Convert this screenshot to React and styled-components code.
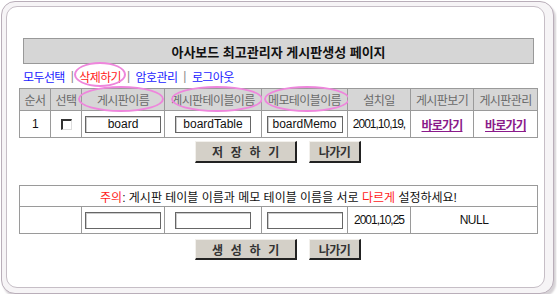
import React from 'react'
import styled, { createGlobalStyle } from 'styled-components'

const GlobalStyle = createGlobalStyle`
  body {
    margin: 0;
    background: #fff;
    font-family: "Liberation Sans", "Noto Sans CJK KR", sans-serif;
    font-size: 12px;
    color: #222;
  }
`

const Frame = styled.div`
  box-sizing: border-box;
  margin: 1px 0 0 1px;
  width: 553px;
  height: 293px;
  padding: 4px 8px 5px 4px;
  border: 1px solid #b9aeb9;
  border-radius: 14px;
  background: #f6f4f6;
  box-shadow: 2px 3px 2px #d6d2d6;
  display: flex;
`

const Card = styled.div`
  flex: 1;
  border: 1px solid #c6bec6;
  border-radius: 11px;
  background: #fff;
  padding: 31px 0 0 12px;
`

const TitleBar = styled.div`
  box-sizing: border-box;
  width: 511px;
  height: 26px;
  margin-left: 4px;
  border: 1px solid #999;
  background: #d6d6d6;
  display: flex;
  align-items: center;
  justify-content: center;
  font-size: 13px;
  font-weight: bold;
  color: #111;
`

const LinkRow = styled.div`
  height: 24px;
  padding-left: 4px;
  display: flex;
  align-items: center;
  gap: 6px;
  letter-spacing: -0.6px;
`

const NavLink = styled.span`
  position: relative;
  color: ${p => (p.$red ? '#ff1a1a' : '#1a1aff')};
`

const Sep = styled.span`
  color: #888;
`

const Ellipse = styled.span`
  position: absolute;
  left: ${p => p.$left}px;
  top: ${p => p.$top}px;
  width: ${p => p.$w}px;
  height: ${p => p.$h}px;
  border: 2px solid #ee86dc;
  border-radius: 50%;
  box-sizing: border-box;
  pointer-events: none;
`

const Table = styled.table`
  width: 518px;
  table-layout: fixed;
  border-collapse: collapse;
  margin-top: ${p => p.$top || 0}px;
`

const Head = styled.th`
  position: relative;
  height: 21px;
  padding: 0;
  border: 1px solid #9a9a9a;
  background: #d6d6d6;
  color: #6a6a6a;
  font-weight: normal;
  letter-spacing: -0.6px;
  white-space: nowrap;
`

const Cell = styled.td`
  height: ${p => p.$h || 26}px;
  padding: 0;
  border: 1px solid #9a9a9a;
  text-align: center;
  color: #111;
  letter-spacing: ${p => p.$spacing ?? -0.5}px;
  white-space: nowrap;
`

const NameInput = styled.input`
  box-sizing: border-box;
  width: 76px;
  height: 17px;
  padding: 0;
  border: 1px solid #666;
  box-shadow: inset 1px 1px 0 #ccc;
  font-family: "Liberation Sans", sans-serif;
  font-size: 12px;
  text-align: center;
  color: #111;
  vertical-align: middle;
`

const Check = styled.span`
  display: inline-block;
  width: 11px;
  height: 11px;
  box-sizing: border-box;
  border-style: solid;
  border-width: 2px 1px 1px 2px;
  border-color: #333 #ddd #ddd #333;
  vertical-align: middle;
`

const GoLink = styled.a`
  color: #8a1a8a;
  font-weight: bold;
  text-decoration: underline;
  letter-spacing: -0.8px;
`

const Red = styled.span`
  color: #ff1a1a;
`

const ButtonRow = styled.div`
  width: 518px;
  display: flex;
  justify-content: center;
  gap: 12px;
  margin-top: ${p => p.$top}px;
`

const Button = styled.button`
  box-sizing: border-box;
  width: ${p => p.$w}px;
  height: ${p => p.$h}px;
  padding: 0;
  background: #d4d0c8;
  border-style: solid;
  border-width: 1px 2px 2px 1px;
  border-color: #f2f0ec #222 #222 #f2f0ec;
  font-family: "Noto Sans CJK KR", sans-serif;
  font-size: 12px;
  font-weight: bold;
  color: #333;
  word-spacing: ${p => (p.$spaced ? '6px' : '0')};
  letter-spacing: -0.5px;
`

const widths = [31, 31, 83, 97, 86, 63, 63, 64]

function Cols() {
  return (
    <colgroup>
      {widths.map((w, i) => (
        <col key={i} style={{ width: w }} />
      ))}
    </colgroup>
  )
}

export default function App() {
  return (
    <>
      <GlobalStyle />
      <Frame>
        <Card>
          <TitleBar>아사보드 최고관리자 게시판생성 페이지</TitleBar>
          <LinkRow>
            <NavLink>모두선택</NavLink>
            <Sep>|</Sep>
            <NavLink $red>
              삭제하기
              <Ellipse $left={-5} $top={-6} $w={52} $h={25} />
            </NavLink>
            <Sep>|</Sep>
            <NavLink>암호관리</NavLink>
            <Sep>|</Sep>
            <NavLink>로그아웃</NavLink>
          </LinkRow>
          <Table>
            <Cols />
            <thead>
              <tr>
                <Head>순서</Head>
                <Head>선택</Head>
                <Head>
                  게시판이름
                  <Ellipse $left={-4} $top={-3} $w={86} $h={26} />
                </Head>
                <Head>
                  게시판테이블이름
                  <Ellipse $left={6} $top={-3} $w={92} $h={26} />
                </Head>
                <Head>
                  메모테이블이름
                  <Ellipse $left={2} $top={-3} $w={86} $h={26} />
                </Head>
                <Head>설치일</Head>
                <Head>게시판보기</Head>
                <Head>게시판관리</Head>
              </tr>
            </thead>
            <tbody>
              <tr>
                <Cell>1</Cell>
                <Cell>
                  <Check />
                </Cell>
                <Cell>
                  <NameInput defaultValue="board" />
                </Cell>
                <Cell>
                  <NameInput defaultValue="boardTable" />
                </Cell>
                <Cell>
                  <NameInput defaultValue="boardMemo" />
                </Cell>
                <Cell $spacing={-1}>2001,10,19,</Cell>
                <Cell>
                  <GoLink>바로가기</GoLink>
                </Cell>
                <Cell>
                  <GoLink>바로가기</GoLink>
                </Cell>
              </tr>
            </tbody>
          </Table>
          <ButtonRow $top={3}>
            <Button $w={102} $h={22} $spaced>저 장 하 기</Button>
            <Button $w={52} $h={22}>나가기</Button>
          </ButtonRow>
          <Table $top={22}>
            <Cols />
            <tbody>
              <tr>
                <Cell colSpan={8} $h={20} $spacing={0}>
                  <Red>주의</Red>: 게시판 테이블 이름과 메모 테이블 이름을 서로 <Red>다르게</Red> 설정하세요!
                </Cell>
              </tr>
              <tr>
                <Cell colSpan={2} />
                <Cell>
                  <NameInput />
                </Cell>
                <Cell>
                  <NameInput />
                </Cell>
                <Cell>
                  <NameInput />
                </Cell>
                <Cell $spacing={-1}>2001,10,25</Cell>
                <Cell colSpan={2}>NULL</Cell>
              </tr>
            </tbody>
          </Table>
          <ButtonRow $top={5}>
            <Button $w={102} $h={21} $spaced>생 성 하 기</Button>
            <Button $w={52} $h={21}>나가기</Button>
          </ButtonRow>
        </Card>
      </Frame>
    </>
  )
}
